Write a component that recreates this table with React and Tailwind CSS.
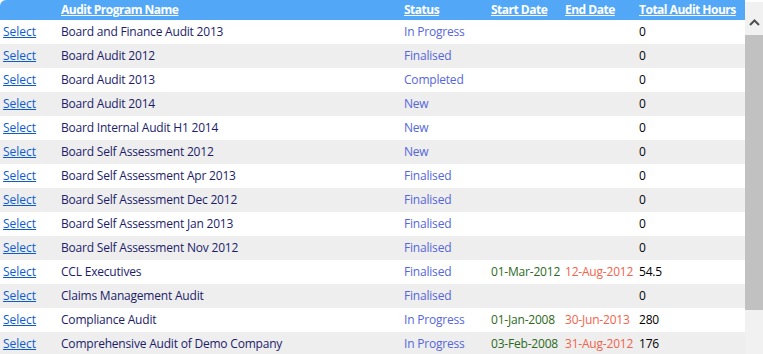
import React from 'react';

const rows = [
  { name: 'Board and Finance Audit 2013', status: 'In Progress', hours: '0' },
  { name: 'Board Audit 2012', status: 'Finalised', hours: '0' },
  { name: 'Board Audit 2013', status: 'Completed', hours: '0' },
  { name: 'Board Audit 2014', status: 'New', hours: '0' },
  { name: 'Board Internal Audit H1 2014', status: 'New', hours: '0' },
  { name: 'Board Self Assessment 2012', status: 'New', hours: '0' },
  { name: 'Board Self Assessment Apr 2013', status: 'Finalised', hours: '0' },
  { name: 'Board Self Assessment Dec 2012', status: 'Finalised', hours: '0' },
  { name: 'Board Self Assessment Jan 2013', status: 'Finalised', hours: '0' },
  { name: 'Board Self Assessment Nov 2012', status: 'Finalised', hours: '0' },
  { name: 'CCL Executives', status: 'Finalised', start: '01-Mar-2012', end: '12-Aug-2012', hours: '54.5' },
  { name: 'Claims Management Audit', status: 'Finalised', hours: '0' },
  { name: 'Compliance Audit', status: 'In Progress', start: '01-Jan-2008', end: '30-Jun-2013', hours: '280' },
  { name: 'Comprehensive Audit of Demo Company', status: 'In Progress', start: '03-Feb-2008', end: '31-Aug-2012', hours: '176' },
];

export default function App() {
  return (
    <div className="w-[763px] h-[354px] overflow-hidden bg-white flex text-[12px] leading-none" style={{ fontFamily: '"Open Sans", "Noto Sans", sans-serif' }}>
      <div className="w-[745px] shrink-0">
        {/* header */}
        <div className="h-[20px] bg-[#52a8f7] rounded-tl-[6px] flex items-center font-bold text-white underline tracking-[-0.5px]">
          <div className="w-[61px] shrink-0" />
          <div className="w-[343px] shrink-0">Audit Program Name</div>
          <div className="w-[87px] shrink-0">Status</div>
          <div className="w-[74px] shrink-0">Start Date</div>
          <div className="w-[74px] shrink-0">End Date</div>
          <div className="flex-1">Total Audit Hours</div>
        </div>
        {rows.map((r, i) => (
          <div key={i} className={`h-[24px] flex items-center tracking-[-0.2px] ${i % 2 ? 'bg-[#eeeeee]' : 'bg-white'}`}>
            <div className="w-[61px] shrink-0 pl-[3px]">
              <a href="#" className="text-[#0b5bd3] underline tracking-normal">Select</a>
            </div>
            <div className="w-[343px] shrink-0 text-[#1c1c6b]">{r.name}</div>
            <div className="w-[87px] shrink-0 text-[#5467dc]">{r.status}</div>
            <div className="w-[74px] shrink-0 text-[#2c6a1c]">{r.start}</div>
            <div className="w-[74px] shrink-0 text-[#f2634c]">{r.end}</div>
            <div className="flex-1 text-black">{r.hours}</div>
          </div>
        ))}
      </div>
      {/* scrollbar */}
      <div className="flex-1 flex flex-col bg-[#f1f1f1] mt-[2px]">
        <div className="h-[33px] flex items-end justify-center pb-[9px]">
          <svg width="11" height="7" viewBox="0 0 11 7">
            <path d="M1 6 L5.5 1.5 L10 6" fill="none" stroke="#505050" strokeWidth="2" />
          </svg>
        </div>
        <div className="h-[275px] bg-[#c1c1c1]" />
      </div>
    </div>
  );
}
